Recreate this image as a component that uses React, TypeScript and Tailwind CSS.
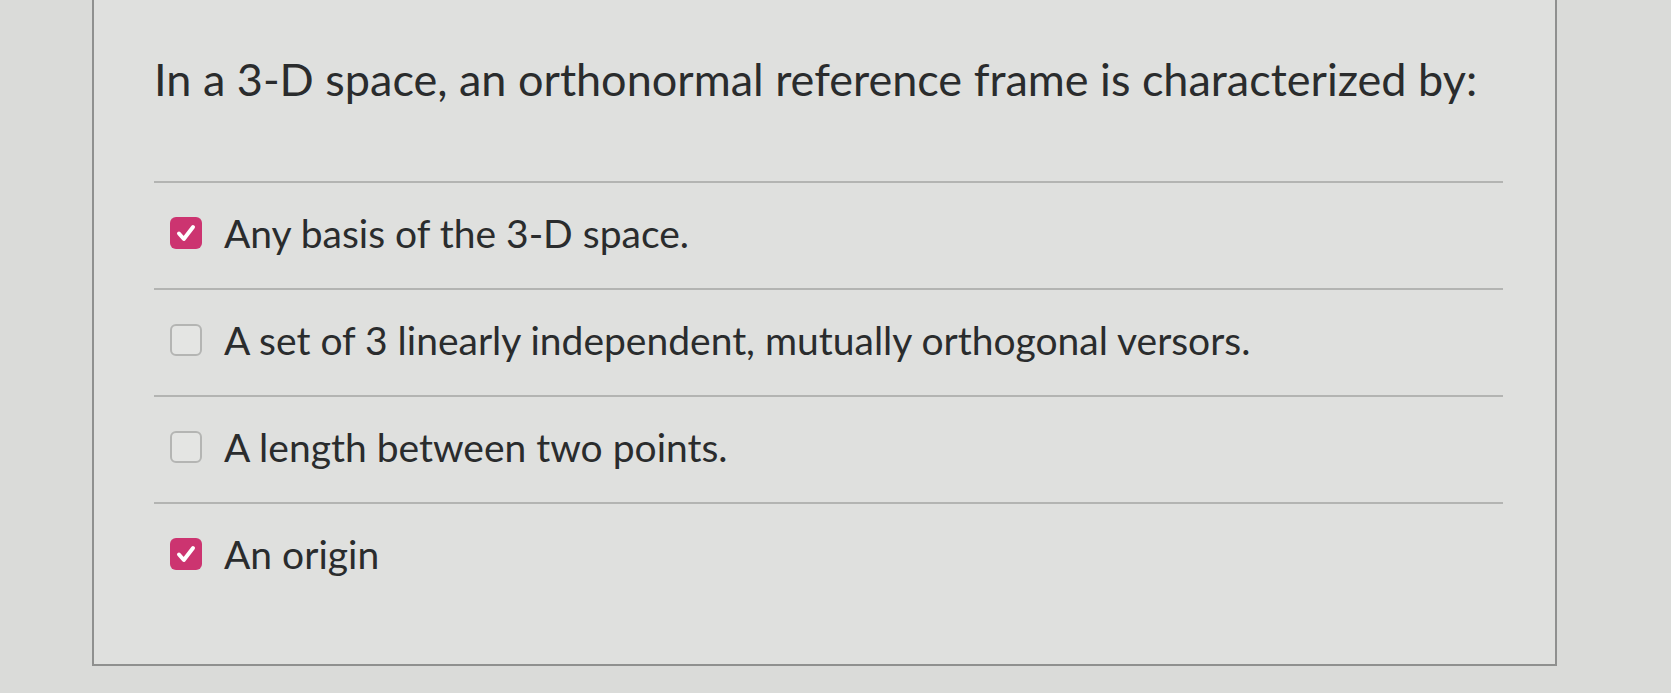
const options = [
  { label: "Any basis of the 3-D space.", checked: true },
  { label: "A set of 3 linearly independent, mutually orthogonal versors.", checked: false },
  { label: "A length between two points.", checked: false },
  { label: "An origin", checked: true },
]

function Checkbox({ checked }: { checked: boolean }) {
  if (checked) {
    return (
      <span className="flex h-[32px] w-[32px] shrink-0 items-center justify-center rounded-[6px] bg-[#cc3470]">
        <svg viewBox="0 0 24 24" className="h-[26px] w-[26px]" fill="none">
          <path d="M5.5 12.5l4.5 5L18.5 6.5" stroke="#fff" strokeWidth="3.6" strokeLinecap="round" strokeLinejoin="round" />
        </svg>
      </span>
    )
  }
  return <span className="h-[32px] w-[32px] shrink-0 rounded-[6px] border-2 border-[#b4b5b3] bg-[#e4e5e3]" />
}

export default function App() {
  return (
    <div className="h-[693px] w-[1671px] overflow-hidden bg-[#dadbd9] font-['Lato','Liberation_Sans',sans-serif] text-[#2a2c2d]">
      <div className="ml-[92px] flex h-[666px] w-[1465px] flex-col border-x-2 border-b-2 border-[#8f908f] bg-[#dfe0de] pl-[60px] pr-[52px]">
        {/* Question */}
        <h1 className="h-[181px] pt-[52px] text-[45px] leading-[54px] font-normal">
          In a 3-D space, an orthonormal reference frame is characterized by:
        </h1>

        {/* Answers */}
        {options.map((o) => (
          <div key={o.label} className="flex h-[107px] items-center gap-[22px] border-t-2 border-[#b3b4b2] pl-[16px] pb-[6px]">
            <Checkbox checked={o.checked} />
            <span className="text-[39px] leading-[46px]">{o.label}</span>
          </div>
        ))}
      </div>
    </div>
  )
}
